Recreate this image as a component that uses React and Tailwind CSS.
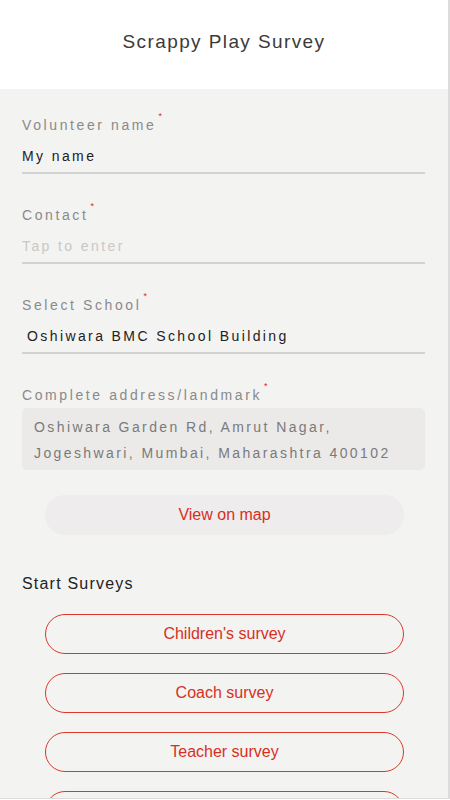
import React from 'react'

const font = { fontFamily: '"Liberation Sans", Arial, sans-serif' }

function Star() {
  return <span className="inline-block align-top text-[#e0261b] text-[9px] leading-none ml-[2px] -mt-[3px]">*</span>
}

function Field({ label, value, placeholder, indent }) {
  return (
    <div className="mb-[31px]">
      <div className="text-[14px] leading-[20px] tracking-[2.6px] text-[#8a8a8a]">
        {label}
        <Star />
      </div>
      <div className={`mt-[11px] pb-[6px] border-b-2 border-[#d2d2d2] text-[14px] leading-[20px] tracking-[2.4px] ${indent ? 'pl-[5px]' : ''} ${value ? 'text-[#222]' : 'text-[#c8c8c8]'}`}>
        {value || placeholder}
      </div>
    </div>
  )
}

export default function App() {
  const surveys = ["Children's survey", 'Coach survey', 'Teacher survey', 'Parent survey']
  return (
    <div style={font} className="w-[450px] h-[800px] bg-white overflow-hidden">
      <div className="w-[450px] h-[799px] border-r-2 border-b border-[#dcdcdc] overflow-hidden bg-[#f3f3f2] flex flex-col">
        <div className="h-[89px] shrink-0 bg-white flex items-center justify-center">
          <h1 className="text-[19px] tracking-[1.4px] text-[#3a3a3a] font-light -mt-[5px]">Scrappy Play Survey</h1>
        </div>

        <div className="pl-[22px] pr-[23px] pt-[26px]">
          <Field label="Volunteer name" value="My name" />
          <Field label="Contact" placeholder="Tap to enter" />
          <Field label="Select School" value="Oshiwara BMC School Building" indent />

          <div className="text-[14px] leading-[20px] tracking-[2.6px] text-[#8a8a8a]">
            Complete address/landmark
            <Star />
          </div>
          <div className="mt-[3px] h-[62px] rounded-[5px] bg-[#ebeae9] px-[12px] pt-[6px] text-[14px] leading-[26px] tracking-[2.4px] text-[#7a7a7a]">
            Oshiwara Garden Rd, Amrut Nagar,
            <br />
            Jogeshwari, Mumbai, Maharashtra 400102
          </div>

          <div className="mt-[25px] ml-[23px] mr-[21px] h-[40px] rounded-full bg-[#eeecec] flex items-center justify-center text-[16px] text-[#d7301f]">
            View on map
          </div>

          <div className="mt-[39px] text-[16px] leading-[20px] tracking-[1.2px] text-[#222]">Start Surveys</div>

          <div className="mt-[20px] ml-[23px] mr-[21px] flex flex-col gap-[19px]">
            {surveys.map((s) => (
              <button
                key={s}
                className="h-[40px] rounded-full border border-[#d9392a] flex items-center justify-center text-[16px] text-[#d7301f] bg-transparent"
              >
                {s}
              </button>
            ))}
          </div>
        </div>
      </div>
    </div>
  )
}
